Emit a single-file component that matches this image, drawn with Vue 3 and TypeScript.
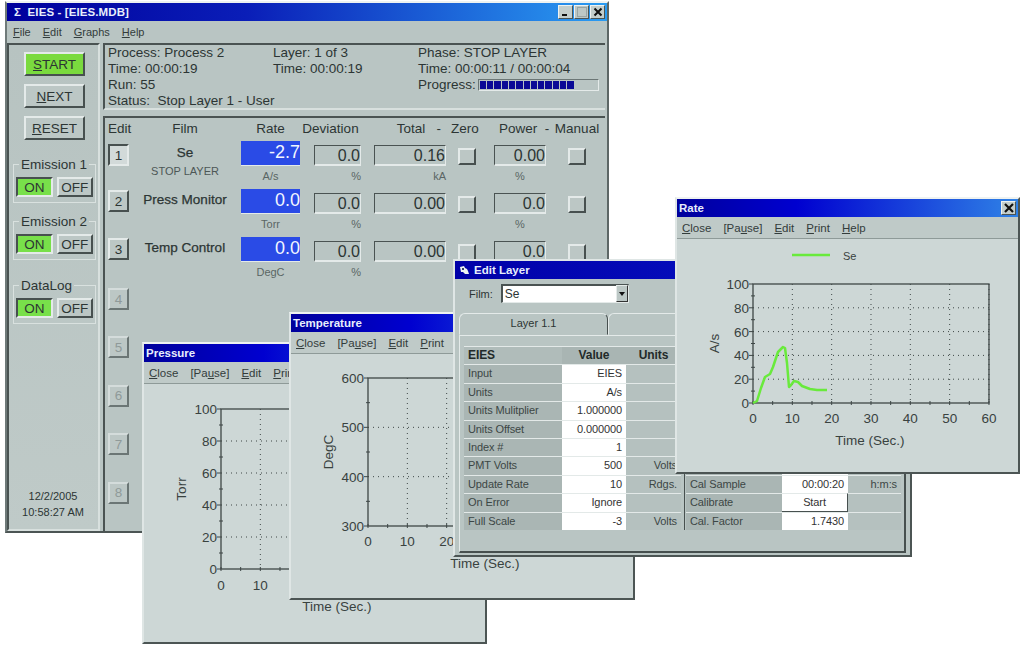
<script setup lang="ts">
interface FilmRow {
  n: number
  film?: string
  sub?: string
  rate?: string
  unit?: string
  dev?: string
  devUnit?: string
  total?: string
  totalUnit?: string
  power?: string
  powerUnit?: string
}

const rows: FilmRow[] = [
  { n: 1, film: 'Se', sub: 'STOP LAYER', rate: '-2.7', unit: 'A/s', dev: '0.0', devUnit: '%', total: '0.16', totalUnit: 'kA', power: '0.00', powerUnit: '%' },
  { n: 2, film: 'Press Monitor', rate: '0.0', unit: 'Torr', dev: '0.0', devUnit: '%', total: '0.00', power: '0.0', powerUnit: '%' },
  { n: 3, film: 'Temp Control', rate: '0.0', unit: 'DegC', dev: '0.0', devUnit: '%', total: '0.00', power: '0.0' },
  { n: 4 }, { n: 5 }, { n: 6 }, { n: 7 }, { n: 8 },
]

const groups = ['Emission 1', 'Emission 2', 'DataLog']
const blocks = Array.from({ length: 13 }, (_, i) => i)

const chartMenu = [
  ['', 'C', 'lose'],
  ['[Pa', 'u', 'se]'],
  ['', 'E', 'dit'],
  ['', 'P', 'rint'],
  ['', 'H', 'elp'],
]
const mainMenu = [
  ['', 'F', 'ile'],
  ['', 'E', 'dit'],
  ['', 'G', 'raphs'],
  ['', 'H', 'elp'],
]

interface Chart {
  key: string
  title: string
  winLeft: number
  winTop: number
  winW: number
  winH: number
  left: number
  top: number
  bottom: number
  yVals: string[]
  yTitle: string
  yTitleX: number
  xLabelY: number
  timeX: number
  timeY: number
  curve?: string
}

const charts: Chart[] = [
  { key: 'pressure', title: 'Pressure', winLeft: 142, winTop: 342, winW: 345, winH: 302, left: 221, top: 409, bottom: 569, yVals: ['100', '80', '60', '40', '20', '0'], yTitle: 'Torr', yTitleX: 186, xLabelY: 590, timeX: 337, timeY: 611 },
  { key: 'temperature', title: 'Temperature', winLeft: 289, winTop: 312, winW: 346, winH: 288, left: 368, top: 378, bottom: 526, yVals: ['600', '500', '400', '300'], yTitle: 'DegC', yTitleX: 333, xLabelY: 546, timeX: 485, timeY: 568 },
  {
    key: 'rate', title: 'Rate', winLeft: 675, winTop: 197, winW: 345, winH: 277, left: 753, top: 284, bottom: 403, yVals: ['100', '80', '60', '40', '20', '0'], yTitle: 'A/s', yTitleX: 719, xLabelY: 423, timeX: 870, timeY: 445,
    curve: '753,403 757,401 761,388 765,377 770,374 773,367 778,352 783,347 785,348 787,363 789,387 791,385 794,381 798,382 802,386 810,389 817,390 827,390',
  },
]

const STEP = 39.33
const PLOT_W = STEP * 6

function ys(c: Chart) {
  const gap = (c.bottom - c.top) / (c.yVals.length - 1)
  return c.yVals.map((label, i) => ({ label, y: c.top + gap * i }))
}
function minorYs(c: Chart) {
  const gap = (c.bottom - c.top) / (c.yVals.length - 1)
  return c.yVals.slice(1).map((_, i) => c.top + gap * (i + 0.5))
}
function xs(c: Chart) {
  return [0, 10, 20, 30, 40, 50, 60].map((v, i) => ({ label: String(v), x: c.left + STEP * i }))
}
function minorXs(c: Chart) {
  return [0, 1, 2, 3, 4, 5].map((i) => c.left + STEP * (i + 0.5))
}
function viewBox(c: Chart) {
  return `${c.winLeft + 2} ${c.winTop + 42} ${c.winW - 4} ${c.winH - 44}`
}

const leftTable = [
  ['Input', 'EIES', ''],
  ['Units', 'A/s', ''],
  ['Units Mulitplier', '1.000000', ''],
  ['Units Offset', '0.000000', ''],
  ['Index #', '1', ''],
  ['PMT Volts', '500', 'Volts'],
  ['Update Rate', '10', 'Rdgs.'],
  ['On Error', 'Ignore', ''],
  ['Full Scale', '-3', 'Volts'],
]
const rightTable = [
  ['', '', ''], ['', '', ''], ['', '', ''], ['', '', ''], ['', '', ''], ['', '', ''],
  ['Cal Sample', '00:00:20', 'h:m:s'],
  ['Calibrate', 'Start', ''],
  ['Cal. Factor', '1.7430', ''],
]
</script>

<template>
  <div class="desktop">
    <!-- main window -->
    <section class="win main-win">
      <header class="title main-title">
        <span class="title-text">Σ&nbsp; EIES - [EIES.MDB]</span>
        <span class="caps">
          <span class="cap"><svg width="12" height="12" viewBox="0 0 12 12"><rect x="2" y="8" width="5" height="2" fill="#111" /></svg></span>
          <span class="cap dim"><svg width="12" height="12" viewBox="0 0 12 12"><rect x="1.5" y="1.5" width="9" height="9" fill="none" stroke="#9aa5a4" /></svg></span>
          <span class="cap"><svg width="12" height="12" viewBox="0 0 12 12"><path d="M2.5 2.5 9.5 9.5M9.5 2.5 2.5 9.5" stroke="#111" stroke-width="2" /></svg></span>
        </span>
      </header>
      <nav class="menu main-menu">
        <span v-for="m in mainMenu" :key="m[1]">{{ m[0] }}<u>{{ m[1] }}</u>{{ m[2] }}</span>
      </nav>
      <div class="main-body">
        <aside class="side sunken">
          <button class="btn big green"><u>S</u>TART</button>
          <button class="btn big"><u>N</u>EXT</button>
          <button class="btn big"><u>R</u>ESET</button>
          <fieldset v-for="g in groups" :key="g" class="group">
            <legend>{{ g }}</legend>
            <div class="toggle">
              <button class="btn tog on">ON</button>
              <button class="btn tog">OFF</button>
            </div>
          </fieldset>
          <div class="clock">12/2/2005<br />10:58:27 AM</div>
        </aside>
        <div class="content">
          <div class="info sunken">
            <span>Process: Process 2</span>
            <span>Layer: 1 of 3</span>
            <span>Phase: STOP LAYER</span>
            <span>Time: 00:00:19</span>
            <span>Time: 00:00:19</span>
            <span>Time: 00:00:11 / 00:00:04</span>
            <span>Run: 55</span>
            <span></span>
            <span class="progress">Progress:
              <span class="bar"><i v-for="b in blocks" :key="b"></i></span>
            </span>
            <span class="status">Status:&nbsp; Stop Layer 1 - User</span>
          </div>
          <div class="films sunken">
            <div class="grid head">
              <span class="h-edit">Edit</span>
              <span>Film</span>
              <span>Rate</span>
              <span class="h-dev">Deviation</span>
              <span class="h-total">Total &nbsp;&nbsp;-</span>
              <span class="h-zero">Zero</span>
              <span class="h-power">Power &nbsp;-</span>
              <span>Manual</span>
            </div>
            <div v-for="r in rows" :key="r.n" class="grid row" :class="{ later: r.n > 3, third: r.n === 3 }">
              <button class="btn edit" :class="{ pressed: r.n === 1, off: r.n > 3 }">{{ r.n }}</button>
              <template v-if="r.film">
                <div class="film" :class="{ first: r.n === 1 }">
                  <b>{{ r.film }}</b>
                  <small v-if="r.sub">{{ r.sub }}</small>
                </div>
                <div class="cell">
                  <output class="field blue">{{ r.rate }}</output>
                  <small class="rate-unit">{{ r.unit }}</small>
                </div>
                <div class="cell end dev">
                  <output class="field plain">{{ r.dev }}</output>
                  <small>{{ r.devUnit }}</small>
                </div>
                <div class="cell end tot">
                  <output class="field plain">{{ r.total }}</output>
                  <small>{{ r.totalUnit }}</small>
                </div>
                <div class="cell center zero"><button class="btn square"></button></div>
                <div class="cell pow">
                  <output class="field plain">{{ r.power }}</output>
                  <small>{{ r.powerUnit }}</small>
                </div>
                <div class="cell center"><button class="btn square"></button></div>
              </template>
            </div>
          </div>
        </div>
      </div>
    </section>

    <!-- chart windows -->
    <section v-for="c in charts" :key="c.key" class="win chart-win" :class="c.key">
      <header class="title">
        <span class="title-text">{{ c.title }}</span>
        <span v-if="c.key === 'rate'" class="caps">
          <span class="cap"><svg width="12" height="12" viewBox="0 0 12 12"><path d="M2 2 10 10M10 2 2 10" stroke="#111" stroke-width="2.2" /></svg></span>
        </span>
      </header>
      <nav class="menu">
        <span v-for="m in chartMenu" :key="m[1]">{{ m[0] }}<u>{{ m[1] }}</u>{{ m[2] }}</span>
      </nav>
      <svg class="plot" :viewBox="viewBox(c)" :width="c.winW - 4" :height="c.winH - 44">
        <g v-if="c.curve">
          <line x1="792" y1="255" x2="830" y2="255" class="green-line" />
          <text x="843" y="260" class="legend">Se</text>
        </g>
        <line v-for="t in xs(c).slice(1)" :key="'gx' + t.label" :x1="t.x" :x2="t.x" :y1="c.top" :y2="c.bottom" class="dots" />
        <line v-for="t in ys(c).slice(1, -1)" :key="'gy' + t.label" :x1="c.left" :x2="c.left + PLOT_W" :y1="t.y" :y2="t.y" class="dots" />
        <rect :x="c.left" :y="c.top" :width="PLOT_W" :height="c.bottom - c.top" class="frame" />
        <line v-for="t in ys(c)" :key="'ty' + t.label" :x1="c.left - 4" :x2="c.left" :y1="t.y" :y2="t.y" class="tick" />
        <line v-for="y in minorYs(c)" :key="'my' + y" :x1="c.left - 2" :x2="c.left + 2" :y1="y" :y2="y" class="tick" />
        <line v-for="t in xs(c)" :key="'tx' + t.label" :x1="t.x" :x2="t.x" :y1="c.bottom - 2" :y2="c.bottom + 2" class="tick" />
        <line v-for="x in minorXs(c)" :key="'mx' + x" :x1="x" :x2="x" :y1="c.bottom - 2" :y2="c.bottom + 2" class="tick" />
        <text v-for="t in ys(c)" :key="'ly' + t.label" :x="c.left - 4" :y="t.y + 5" text-anchor="end" class="lab">{{ t.label }}</text>
        <text v-for="t in xs(c)" :key="'lx' + t.label" :x="t.x" :y="c.xLabelY" text-anchor="middle" class="lab">{{ t.label }}</text>
        <text :transform="`rotate(-90 ${c.yTitleX} ${(c.top + c.bottom) / 2})`" :x="c.yTitleX" :y="(c.top + c.bottom) / 2" text-anchor="middle" class="lab">{{ c.yTitle }}</text>
        <text :x="c.timeX" :y="c.timeY" text-anchor="middle" class="lab">Time (Sec.)</text>
        <polyline v-if="c.curve" :points="c.curve" class="green-line" />
      </svg>
    </section>

    <!-- edit layer -->
    <section class="win edit-win">
      <header class="title edit-title">
        <svg width="11" height="11" viewBox="0 0 11 11"><path d="M1 2 5 1 6 3 8 4 9 6 10 9 6 9 4 7 2 7z" fill="#eef3f2" /><rect x="3" y="3" width="2" height="2" fill="#33406a" /></svg>
        <span class="title-text">Edit Layer</span>
      </header>
      <div class="film-row">
        <label>Film:</label>
        <div class="select">
          <span>Se</span>
          <span class="drop"><svg width="6" height="4" viewBox="0 0 6 4"><path d="M0 0h6L3 4z" fill="#111" /></svg></span>
        </div>
      </div>
      <div class="tabs">
        <span class="tab">Layer 1.1</span>
        <span class="tab tab2"></span>
      </div>
      <div class="tab-panel">
        <div class="tables">
          <div class="table t-left">
            <span class="th first-col">EIES</span><span class="th center-h">Value</span><span class="th center-h">Units</span>
            <template v-for="r in leftTable" :key="r[0]">
              <span class="td lab-c">{{ r[0] }}</span><span class="td val-c">{{ r[1] }}</span><span class="td unit-c">{{ r[2] }}</span>
            </template>
          </div>
          <div class="table t-right">
            <span class="th first-col"></span><span class="th center-h"></span><span class="th center-h"></span>
            <template v-for="(r, i) in rightTable" :key="i">
              <span class="td lab-c">{{ r[0] }}</span>
              <span v-if="r[1] === 'Start'" class="td val-c start-cell">Start</span>
              <span v-else class="td val-c" :class="{ blank: !r[1] }">{{ r[1] }}</span>
              <span class="td unit-c">{{ r[2] }}</span>
            </template>
          </div>
        </div>
      </div>
    </section>
  </div>
</template>

<style>
html, body { margin: 0; background: #fff; }
</style>

<style scoped>
.desktop {
  position: relative;
  width: 1024px;
  height: 648px;
  overflow: hidden;
  background: #fff;
  font-family: "Liberation Sans", Arial, sans-serif;
  font-size: 13.5px;
  color: #2c3534;
}
.win {
  position: absolute;
  box-sizing: border-box;
  display: flex;
  flex-direction: column;
  overflow: hidden;
  background: #b9c5c3;
  border: 2px solid;
  border-color: #eef2f1 #4c5554 #4c5554 #dfe6e5;
}
.main-win { left: 5px; top: 1px; width: 604px; height: 532px; border-color: #eef2f1 #5d6766 #4c5554 #6f7a79; }
.title {
  flex: none;
  height: 18px;
  display: flex;
  align-items: center;
  justify-content: space-between;
  padding: 0 2px;
  background: linear-gradient(90deg, #00009c, #0000d0 35%, #2f82e6);
  color: #e8eefc;
  font-size: 11.5px;
  font-weight: 700;
}
.main-title { background: linear-gradient(90deg, #00009c 0%, #0a1eb8 40%, #2a9cf2 100%); padding-left: 7px; }
.main-title .title-text { font-size: 11.5px; letter-spacing: 0.1px; }
.caps { display: flex; gap: 1px; }
.cap {
  width: 15px;
  height: 14px;
  box-sizing: border-box;
  display: flex;
  align-items: center;
  justify-content: center;
  background: #c4cecc;
  border: 1px solid;
  border-color: #eef2f1 #4c5554 #4c5554 #eef2f1;
}
.cap.dim { background: #bcc7c5; }
.menu {
  flex: none;
  height: 22px;
  box-sizing: border-box;
  display: flex;
  align-items: center;
  gap: 12px;
  padding: 0 5px;
  font-size: 11.5px;
  color: #333c3b;
  background: #bfcac8;
  border-bottom: 1px solid #8e9a98;
}
.main-menu { padding-left: 6px; font-size: 11px; border-bottom: 0; background: #b9c5c3; }
.menu u { text-underline-offset: 1px; }
.main-body { flex: 1; display: flex; min-height: 0; }
.sunken {
  box-sizing: border-box;
  border: 2px solid;
  border-color: #4a5352 #d8e0de #d8e0de #4a5352;
}
.side {
  flex: none;
  width: 93px;
  display: flex;
  flex-direction: column;
  padding: 7px 0 9px 4px;
  background: linear-gradient(180deg, #b7c3c1, #bfcac8);
}
.btn {
  font: inherit;
  color: inherit;
  padding: 0;
  box-sizing: border-box;
  background: #bcc7c5;
  border: 2px solid;
  border-color: #e4eae9 #47504f #47504f #e4eae9;
}
.big { width: 61px; height: 24px; margin-left: 11px; margin-bottom: 8px; }
.green { background: #7ada3e; }
.group {
  margin: 0 0 11px 0;
  width: 83px;
  box-sizing: border-box;
  padding: 5px 2px 5px;
  border: 1px solid #d9e1df;
  min-width: 0;
}
.group:nth-of-type(1) { margin-top: 9px; }
.group:nth-of-type(2) { margin-bottom: 18px; }
.group legend { padding: 0 2px; margin-left: 3px; line-height: 15px; }
.toggle { display: flex; gap: 4px; }
.tog { flex: 1; height: 20px; }
.tog.on { background: #78e04a; border-color: #47504f #e4eae9 #e4eae9 #47504f; }
.clock { margin-top: auto; text-align: center; font-size: 11px; line-height: 16px; margin-right: 5px; }
.content { flex: 1; display: flex; flex-direction: column; gap: 6px; min-width: 0; padding-left: 3px; margin-right: 2px; }
.info {
  flex: none;
  height: 67px;
  display: grid;
  grid-template-columns: 165px 145px 1fr;
  grid-auto-rows: 16px;
  padding: 0 0 0 3px;
  line-height: 16px;
  border-right: 0;
  white-space: nowrap;
}
.progress { display: flex; align-items: center; gap: 2px; }
.bar {
  width: 121px;
  height: 12px;
  box-sizing: border-box;
  display: flex;
  gap: 1px;
  padding: 1px;
  border: 1px solid;
  border-color: #6b7675 #e4eae9 #e4eae9 #6b7675;
}
.bar i { width: 6.3px; background: #0a0a96; }
.status { grid-column: 1 / -1; grid-row: 4; }
.films { flex: 1; padding: 0 0 0 3px; border-bottom: 0; border-right: 0; }
.grid {
  display: grid;
  grid-template-columns: 21px 112px 59px 61px 85px 48px 52px 62px;
  align-items: start;
}
.head { height: 23px; line-height: 22px; text-align: center; white-space: nowrap; }
.head .h-edit { text-align: left; }
.head .h-total { text-align: right; padding-right: 5px; }
.head .h-zero { text-align: left; padding-left: 5px; }
.head .h-power { text-align: left; padding-left: 5px; }
.row { height: 48px; }
.row.third { height: 50px; }
.row.later { height: 48.4px; }
.edit { width: 21px; height: 22px; margin-top: 1px; }
.edit.pressed { margin-top: 3px; background: #d2dad9; border-color: #47504f #e4eae9 #e4eae9 #47504f; }
.edit.off { color: #8f9a99; border-color: #d4dcdb #6b7675 #6b7675 #d4dcdb; }
.film { display: flex; flex-direction: column; align-items: center; padding-top: 2px; }
.film.first { padding-top: 3px; }
.film b { font-weight: 400; -webkit-text-stroke: 0.25px currentColor; line-height: 17px; }
.film small { font-size: 11px; line-height: 21px; color: #4d5756; }
.cell { display: flex; flex-direction: column; align-items: center; }
.cell.end { align-items: flex-end; }
.cell.center { padding-top: 7px; }
.cell.zero { padding-right: 7px; }
small { font-size: 11px; color: #5a6564; line-height: 20px; }
.field {
  display: block;
  box-sizing: border-box;
  text-align: right;
  font-size: 16px;
  line-height: 19px;
  white-space: nowrap;
}
.blue {
  width: 59px;
  height: 24px;
  background: #2a4be6;
  color: #f2f6ff;
  font-size: 18px;
  line-height: 23px;
  box-shadow: 0 1px 0 #e4eae9;
}
.rate-unit { line-height: 22px; }
.plain {
  height: 21px;
  margin-top: 4px;
  border: 1px solid;
  border-color: #4a5352 #e4eae9 #e4eae9 #4a5352;
  border-width: 1px 1px 2px 1px;
}
.dev .plain { width: 47px; }
.tot .plain { width: 72px; }
.pow .plain { width: 52px; }
.square { width: 18px; height: 17px; }
.chart-win { background: #cdd7d6; }
.pressure { left: 142px; top: 342px; width: 345px; height: 302px; }
.temperature { left: 289px; top: 312px; width: 346px; height: 288px; }
.rate { left: 675px; top: 197px; width: 345px; height: 277px; z-index: 3; }
.plot { display: block; flex: none; }
.lab { font-size: 13.5px; fill: #39423f; font-family: "Liberation Sans", Arial, sans-serif; }
.legend { font-size: 11px; fill: #39423f; font-family: "Liberation Sans", Arial, sans-serif; }
.frame { fill: none; stroke: #3e4746; stroke-width: 1.3; }
.tick { stroke: #3e4746; stroke-width: 1; }
.dots { stroke: #3e4746; stroke-width: 1; stroke-dasharray: 1 4; }
.green-line { fill: none; stroke: #69ea3c; stroke-width: 2.5; stroke-linejoin: round; }
.edit-win {
  left: 453px;
  top: 259px;
  width: 459px;
  height: 298px;
  z-index: 2;
  border-color: #dfe6e5 #4c5554 #4c5554 #dfe6e5;
  background: #b9c5c3;
  font-size: 11px;
}
.edit-title {
  justify-content: flex-start;
  gap: 4px;
  padding-left: 4px;
  background: linear-gradient(90deg, #0000a8, #0a18cc);
}
.film-row { flex: none; height: 24px; display: flex; align-items: center; gap: 8px; padding: 2px 0 0 14px; font-size: 11px; }
.film-row label { padding-top: 2px; }
.select {
  width: 128px;
  height: 19px;
  box-sizing: border-box;
  display: flex;
  align-items: center;
  justify-content: space-between;
  padding-left: 2px;
  font-size: 12px;
  background: #fff;
  border: 1px solid;
  border-color: #4a5352 #e4eae9 #e4eae9 #4a5352;
  border-width: 2px 1px 1px 2px;
}
.drop {
  width: 10px;
  height: 15px;
  display: flex;
  align-items: center;
  justify-content: center;
  background: #bcc7c5;
  border: 1px solid;
  border-color: #e4eae9 #333 #333 #e4eae9;
}
.tabs { flex: none; display: flex; margin: 8px 0 0 4px; height: 22px; }
.tab {
  box-sizing: border-box;
  width: 149px;
  height: 22px;
  text-align: center;
  line-height: 19px;
  font-size: 11px;
  border: 1px solid;
  border-color: #e4eae9 #47504f transparent #e4eae9;
  border-radius: 6px 6px 0 0;
}
.tab2 { width: 285px; }
.tab-panel {
  flex: none;
  width: 447px;
  height: 218px;
  margin-left: 4px;
  box-sizing: border-box;
  padding: 10px 4px 0;
  border: 1px solid;
  border-color: #e4eae9 #47504f #47504f #e4eae9;
  border-width: 1px 2px 2px 1px;
}
.tables { display: flex; gap: 3px; }
.table { display: grid; grid-auto-rows: 18.4px; align-items: stretch; }
.t-left { grid-template-columns: 98px 64px 55px; }
.t-right { grid-template-columns: 96px 66px 53px; border-left: 1px solid #47504f; padding-left: 1px; }
.th, .td {
  box-sizing: border-box;
  border-top: 1px solid #e3e9e8;
  padding: 0 4px;
  line-height: 17px;
  white-space: nowrap;
  overflow: hidden;
  letter-spacing: -0.1px;
}
.th { font-size: 12px; font-weight: 700; color: #222a29; background: #b0bcba; }
.center-h { text-align: center; background: #a9b5b3; }
.lab-c { background: #aab6b4; color: #3c4645; }
.val-c { background: #fff; text-align: right; color: #333; }
.unit-c { background: #b5c1bf; text-align: right; color: #3c4645; }
.start-cell {
  text-align: center;
  border-right: 1px solid #47504f;
  border-bottom: 1px solid #47504f;
}
</style>
